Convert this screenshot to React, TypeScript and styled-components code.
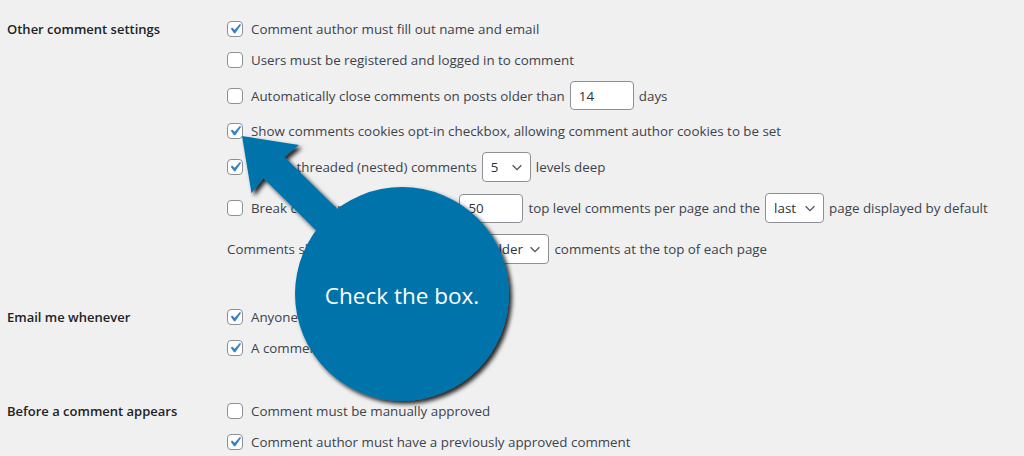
import React from "react";
import styled, { createGlobalStyle } from "styled-components";

const GlobalStyle = createGlobalStyle`
  html, body {
    margin: 0;
    padding: 0;
    background: #f0f0f1;
  }
  body {
    font-family: "Open Sans", "Noto Sans", sans-serif;
    font-size: 13.35px;
    color: #3c434a;
  }
`;

const Page = styled.div`
  position: relative;
  width: 1024px;
  height: 456px;
  overflow: hidden;
  box-sizing: border-box;
  padding: 19px 0 0 7px;
  display: flex;
  flex-direction: column;
  gap: 43px;
`;

const Section = styled.section`
  display: grid;
  grid-template-columns: 220px 1fr;
  align-items: start;
`;

const Heading = styled.h3`
  margin: 0;
  font-size: 13px;
  font-weight: 600;
  line-height: 20px;
  color: #1d2327;
`;

const Options = styled.div`
  display: flex;
  flex-direction: column;
  gap: 11px;
`;

const Row = styled.div`
  display: flex;
  align-items: center;
  gap: 5px;
  min-height: 20px;
  line-height: 20px;
  white-space: nowrap;
`;

const Box = styled.span`
  width: 16px;
  height: 16px;
  box-sizing: border-box;
  flex: none;
  display: flex;
  align-items: center;
  justify-content: center;
  margin-right: 3px;
  border: 1px solid #8c8f94;
  border-radius: 4px;
  background: #fff;
  overflow: visible;
`;

const TextInput = styled.input`
  width: 64px;
  height: 29px;
  box-sizing: border-box;
  padding: 0 8px;
  border: 1px solid #8c8f94;
  border-radius: 4px;
  background: #fff;
  font: inherit;
  color: #2c3338;
  outline: none;
`;

const Select = styled.div<{ $width: number }>`
  width: ${(p) => p.$width}px;
  height: 30px;
  box-sizing: border-box;
  display: flex;
  align-items: center;
  justify-content: space-between;
  padding: 0 6px 0 8px;
  border: 1px solid #8c8f94;
  border-radius: 4px;
  background: #fff;
  color: #2c3338;
`;

const Callout = styled.svg`
  position: absolute;
  left: 0;
  top: 0;
  width: 1024px;
  height: 456px;
  pointer-events: none;
`;

const Caption = styled.text`
  font-family: "Open Sans", "Noto Sans", sans-serif;
  font-size: 22.5px;
  fill: #fff;
`;

function Checkbox({ checked }: { checked?: boolean }) {
  return (
    <Box>
      {checked && (
        <svg width="20" height="20" viewBox="0 0 20 20" style={{ flex: "none" }}>
          <path d="M14.83 4.89l1.34.94-5.81 8.38H9.02L5.78 9.67l1.34-1.25 2.57 2.4z" fill="#3582c4" />
        </svg>
      )}
    </Box>
  );
}

function Dropdown({ value, width }: { value: string; width: number }) {
  return (
    <Select $width={width}>
      <span>{value}</span>
      <svg width="14" height="14" viewBox="0 0 16 16">
        <polyline points="3,6 8,11 13,6" fill="none" stroke="#50575e" strokeWidth="1.6" />
      </svg>
    </Select>
  );
}

export default function App() {
  return (
    <>
      <GlobalStyle />
      <Page>
        <Section>
          <Heading>Other comment settings</Heading>
          <Options>
            <Row>
              <Checkbox checked />
              <span>Comment author must fill out name and email</span>
            </Row>
            <Row>
              <Checkbox />
              <span>Users must be registered and logged in to comment</span>
            </Row>
            <Row>
              <Checkbox />
              <span>Automatically close comments on posts older than</span>
              <TextInput defaultValue="14" readOnly />
              <span>days</span>
            </Row>
            <Row>
              <Checkbox checked />
              <span>Show comments cookies opt-in checkbox, allowing comment author cookies to be set</span>
            </Row>
            <Row>
              <Checkbox checked />
              <span>Enable threaded (nested) comments</span>
              <Dropdown value="5" width={49} />
              <span>levels deep</span>
            </Row>
            <Row>
              <Checkbox />
              <span>Break comments into pages with</span>
              <TextInput defaultValue="50" readOnly />
              <span>top level comments per page and the</span>
              <Dropdown value="last" width={59} />
              <span>page displayed by default</span>
            </Row>
            <Row>
              <span>Comments should be displayed with the</span>
              <Dropdown value="older" width={68} />
              <span>comments at the top of each page</span>
            </Row>
          </Options>
        </Section>

        <Section>
          <Heading>Email me whenever</Heading>
          <Options>
            <Row>
              <Checkbox checked />
              <span>Anyone posts a comment</span>
            </Row>
            <Row>
              <Checkbox checked />
              <span>A comment is held for moderation</span>
            </Row>
          </Options>
        </Section>

        <Section>
          <Heading>Before a comment appears</Heading>
          <Options>
            <Row>
              <Checkbox />
              <span>Comment must be manually approved</span>
            </Row>
            <Row>
              <Checkbox checked />
              <span>Comment author must have a previously approved comment</span>
            </Row>
          </Options>
        </Section>

        <Callout viewBox="0 0 1024 456">
          <defs>
            <filter id="callout-shadow" x="-20%" y="-20%" width="140%" height="140%">
              <feDropShadow dx="3" dy="3" stdDeviation="2.2" floodColor="#000" floodOpacity="0.85" />
            </filter>
          </defs>
          <g filter="url(#callout-shadow)" fill="#0073aa">
            <polygon points="242,136 299,145 284.5,157 394.7,265.7 373.7,287.1 263.5,178.3 251.5,193.2" />
            <circle cx="402" cy="294" r="107" />
          </g>
          <Caption x="402" y="304" textAnchor="middle">
            Check the box.
          </Caption>
        </Callout>
      </Page>
    </>
  );
}
